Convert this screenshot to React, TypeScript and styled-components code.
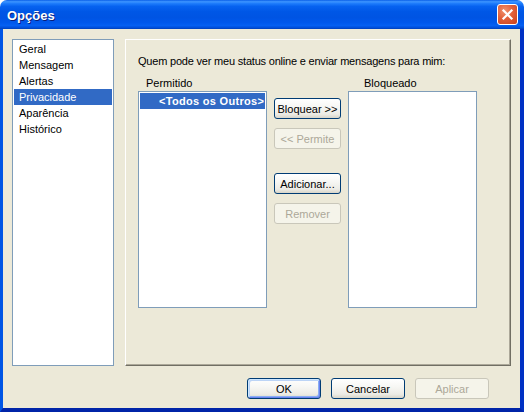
import React from 'react';
import styled, { createGlobalStyle } from 'styled-components';

const GlobalStyle = createGlobalStyle`
  html, body {
    margin: 0;
    padding: 0;
    background: #ffffff;
  }
  body {
    font-family: "Liberation Sans", Arial, sans-serif;
    font-size: 11px;
    color: #000000;
  }
`;

const Window = styled.div`
  width: 524px;
  height: 412px;
  display: flex;
  flex-direction: column;
  box-sizing: border-box;
`;

const TitleBar = styled.div`
  height: 29px;
  flex-shrink: 0;
  display: flex;
  align-items: center;
  justify-content: space-between;
  padding: 0 6px 0 7px;
  border-radius: 7px 7px 0 0;
  background: linear-gradient(
    to bottom,
    #0a5fe8 0%,
    #3d95ff 6%,
    #1e7cfb 12%,
    #0662f0 22%,
    #0057e6 40%,
    #0054e3 60%,
    #0058ec 78%,
    #0560f2 88%,
    #004dd8 96%,
    #0040b8 100%
  );
`;

const Title = styled.span`
  font-family: "Liberation Sans", Arial, sans-serif;
  font-weight: bold;
  font-size: 13px;
  color: #ffffff;
  text-shadow: 1px 1px 0 #0a1e7a;
  padding-top: 1px;
`;

const CloseButton = styled.div`
  width: 21px;
  height: 21px;
  box-sizing: border-box;
  border: 1px solid #ffffff;
  border-radius: 3px;
  background: radial-gradient(circle at 35% 30%, #f0926e 0%, #e2603a 45%, #c8401c 100%);
  display: flex;
  align-items: center;
  justify-content: center;
`;

const Client = styled.div`
  flex: 1;
  display: flex;
  flex-direction: column;
  background: #ece9d8;
  border-left: 3px solid #0055e5;
  border-right: 4px solid #0031c4;
  border-bottom: 4px solid #0024a8;
  padding: 10px 9px 0 9px;
`;

const MainRow = styled.div`
  display: flex;
  gap: 11px;
  height: 327px;
`;

const Sidebar = styled.div`
  width: 102px;
  box-sizing: border-box;
  background: #ffffff;
  border: 1px solid #7f9db9;
  padding: 1px;
`;

const ListItem = styled.div<{ $selected?: boolean; $bold?: boolean; $indent?: number }>`
  height: 16px;
  line-height: 16px;
  padding-left: ${(p) => p.$indent ?? 5}px;
  white-space: nowrap;
  overflow: hidden;
  font-weight: ${(p) => (p.$bold ? 'bold' : 'normal')};
  letter-spacing: ${(p) => (p.$bold ? '0.3px' : 'normal')};
  background: ${(p) => (p.$selected ? '#316ac5' : 'transparent')};
  color: ${(p) => (p.$selected ? '#ffffff' : '#000000')};
`;

const Panel = styled.div`
  flex: 1;
  box-sizing: border-box;
  border-top: 1px solid #ffffff;
  border-left: 1px solid #ffffff;
  border-right: 1px solid #716f64;
  border-bottom: 1px solid #716f64;
  box-shadow: inset -1px -1px 0 #aca899;
  padding: 14px 12px 0 12px;
`;

const Prompt = styled.div`
  line-height: 14px;
  white-space: nowrap;
  letter-spacing: -0.2px;
`;

const ListsGrid = styled.div`
  margin-top: 8px;
  display: grid;
  grid-template-columns: 129px 67px 129px;
  grid-template-rows: 15px 217px;
  column-gap: 7px;
`;

const ListLabel = styled.div<{ $offset: number }>`
  padding-left: ${(p) => p.$offset}px;
  line-height: 14px;
`;

const ListBox = styled.div`
  box-sizing: border-box;
  background: #ffffff;
  border: 1px solid #7f9db9;
  padding: 1px;
  overflow: hidden;
`;

const ButtonColumn = styled.div`
  display: flex;
  flex-direction: column;
  padding-top: 7px;
`;

const XPButton = styled.button<{ $default?: boolean; $gap?: number; $width?: number }>`
  width: ${(p) => p.$width ?? 67}px;
  height: 21px;
  margin: ${(p) => p.$gap ?? 0}px 0 0 0;
  padding: 0;
  box-sizing: border-box;
  font-family: "Liberation Sans", Arial, sans-serif;
  font-size: 11px;
  color: #000000;
  border: 1px solid #003c74;
  border-radius: 3px;
  background: linear-gradient(to bottom, #ffffff 0%, #f7f7f4 40%, #ecebe5 80%, #d8d5c9 100%);
  box-shadow: ${(p) =>
    p.$default
      ? 'inset 1px 1px 0 #cee7ff, inset -1px -1px 0 #6982ee, inset 2px 2px 0 #bcd4f6, inset -2px -2px 0 #89adf4'
      : 'none'};
  cursor: default;

  &:disabled {
    color: #aca899;
    border-color: #c9c7ba;
    background: #f5f4ea;
    box-shadow: none;
  }
`;

const Footer = styled.div`
  display: flex;
  justify-content: flex-end;
  gap: 10px;
  padding: 12px 22px 0 0;
`;

const CloseIcon = () => (
  <svg width="13" height="13" viewBox="0 0 13 13">
    <path d="M2.5 2.5 L10.5 10.5 M10.5 2.5 L2.5 10.5" stroke="#ffffff" strokeWidth="2.2" strokeLinecap="square" />
  </svg>
);

const sections = ['Geral', 'Mensagem', 'Alertas', 'Privacidade', 'Aparência', 'Histórico'];

const App = () => {
  return (
    <>
      <GlobalStyle />
      <Window>
        <TitleBar>
          <Title>Opções</Title>
          <CloseButton>
            <CloseIcon />
          </CloseButton>
        </TitleBar>
        <Client>
          <MainRow>
            <Sidebar>
              {sections.map((s) => (
                <ListItem key={s} $selected={s === 'Privacidade'}>
                  {s}
                </ListItem>
              ))}
            </Sidebar>
            <Panel>
              <Prompt>Quem pode ver meu status online e enviar mensagens para mim:</Prompt>
              <ListsGrid>
                <ListLabel $offset={8}>Permitido</ListLabel>
                <div />
                <ListLabel $offset={16}>Bloqueado</ListLabel>
                <ListBox>
                  <ListItem $selected $bold $indent={19}>
                    &lt;Todos os Outros&gt;
                  </ListItem>
                </ListBox>
                <ButtonColumn>
                  <XPButton>Bloquear &gt;&gt;</XPButton>
                  <XPButton $gap={9} disabled>
                    &lt;&lt; Permite
                  </XPButton>
                  <XPButton $gap={24}>Adicionar...</XPButton>
                  <XPButton $gap={9} disabled>
                    Remover
                  </XPButton>
                </ButtonColumn>
                <ListBox />
              </ListsGrid>
            </Panel>
          </MainRow>
          <Footer>
            <XPButton $default $width={74}>
              OK
            </XPButton>
            <XPButton $width={74}>Cancelar</XPButton>
            <XPButton $width={74} disabled>
              Aplicar
            </XPButton>
          </Footer>
        </Client>
      </Window>
    </>
  );
};

export default App;
